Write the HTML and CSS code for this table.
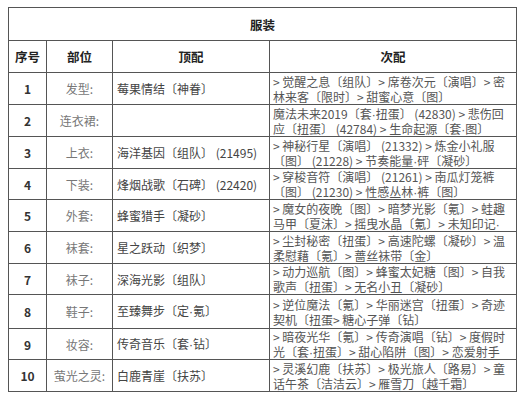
FILE: index.html
```html
<!DOCTYPE html>
<html lang="zh">
<head>
<meta charset="utf-8">
<link rel="stylesheet" href="styles.css">
</head>
<body>
<table class="tbl">
  <colgroup>
    <col class="c-no"><col class="c-part"><col class="c-top"><col class="c-sub">
  </colgroup>
  <tr class="r-title"><th colspan="4">服装</th></tr>
  <tr class="r-head"><th>序号</th><th>部位</th><th>顶配</th><th>次配</th></tr>
  <tr><td class="no">1</td><td class="part">发型:</td><td class="top">莓果情结〔神眷〕</td><td class="sub"><span class="ln">&gt; 觉醒之息〔组队〕&gt; 席卷次元〔演唱〕&gt; 密</span><span class="ln">林来客〔限时〕&gt; 甜蜜心意〔图〕</span></td></tr>
  <tr><td class="no">2</td><td class="part">连衣裙:</td><td class="top"></td><td class="sub"><span class="ln">魔法未来2019〔套<span class="dot">·</span>扭蛋〕 (42830) &gt; 悲伤回</span><span class="ln">应〔扭蛋〕 (42784) &gt; 生命起源〔套<span class="dot">·</span>图〕</span></td></tr>
  <tr><td class="no">3</td><td class="part">上衣:</td><td class="top">海洋基因〔组队〕 (21495)</td><td class="sub"><span class="ln">&gt; 神秘行星〔演唱〕 (21332) &gt; 炼金小礼服</span><span class="ln">〔图〕 (21228) &gt; 节奏能量<span class="dot">·</span>砰〔凝砂〕</span></td></tr>
  <tr class="short"><td class="no">4</td><td class="part">下装:</td><td class="top">烽烟战歌〔石碑〕 (22420)</td><td class="sub"><span class="ln">&gt; 穿梭音符〔演唱〕 (21261) &gt; 南瓜灯笼裤</span><span class="ln">〔图〕 (21230) &gt; 性感丛林<span class="dot">·</span>裤〔图〕</span></td></tr>
  <tr><td class="no">5</td><td class="part">外套:</td><td class="top">蜂蜜猎手〔凝砂〕</td><td class="sub"><span class="ln">&gt; 魔女的夜晚〔图〕&gt; 暗梦光影〔氪〕&gt; 蛙趣</span><span class="ln">马甲〔夏沫〕&gt; 摇曳水晶〔氪〕&gt; 未知印记<span class="dot">·</span></span></td></tr>
  <tr><td class="no">6</td><td class="part">袜套:</td><td class="top">星之跃动〔织梦〕</td><td class="sub"><span class="ln">&gt; 尘封秘密〔扭蛋〕&gt; 高速陀螺〔凝砂〕&gt; 温</span><span class="ln">柔慰藉〔氪〕&gt; 蔷丝袜带〔金〕</span></td></tr>
  <tr class="short"><td class="no">7</td><td class="part">袜子:</td><td class="top">深海光影〔组队〕</td><td class="sub"><span class="ln">&gt; 动力巡航〔图〕&gt; 蜂蜜太妃糖〔图〕&gt; 自我</span><span class="ln">歌声〔扭蛋〕&gt; 无名小丑〔凝砂〕</span></td></tr>
  <tr class="tall"><td class="no">8</td><td class="part">鞋子:</td><td class="top">至臻舞步〔定<span class="dot">·</span>氪〕</td><td class="sub"><span class="ln">&gt; 逆位魔法〔氪〕&gt; 华丽迷宫〔扭蛋〕&gt; 奇迹</span><span class="ln">契机〔扭蛋&gt; 糖心子弹〔钻〕</span></td></tr>
  <tr class="short"><td class="no">9</td><td class="part">妆容:</td><td class="top">传奇音乐〔套<span class="dot">·</span>钻〕</td><td class="sub"><span class="ln">&gt; 暗夜光华〔氪〕&gt; 传奇演唱〔钻〕&gt; 度假时</span><span class="ln">光〔套<span class="dot">·</span>扭蛋〕&gt; 甜心陷阱〔图〕&gt; 恋爱射手</span></td></tr>
  <tr><td class="no">10</td><td class="part">萤光之灵:</td><td class="top">白鹿青崖〔扶苏〕</td><td class="sub"><span class="ln">&gt; 灵溪幻鹿〔扶苏〕&gt; 极光旅人〔路易〕&gt; 童</span><span class="ln">话午茶〔洁洁云〕&gt; 雁雪刀〔越千霜〕</span></td></tr>
</table>
</body>
</html>
```

FILE: styles.css
```css
html, body {
  margin: 0;
  padding: 0;
  background: #ffffff;
}
body {
  padding: 7px 8px;
  font-family: "Noto Sans CJK SC", "Noto Sans", sans-serif;
  font-size: 12px;
  line-height: 15px;
  color: #444;
}
.tbl {
  width: 508px;
  border-collapse: collapse;
  table-layout: fixed;
  border: 1px solid #444;
}
.c-no { width: 38px; }
.c-part { width: 66px; }
.c-top { width: 157px; }
.c-sub { width: 247px; }
.tbl th, .tbl td {
  border: 1px solid #555;
  padding: 0;
  white-space: nowrap;
  overflow: hidden;
}
.tbl th {
  font-weight: bold;
  font-size: 12.5px;
  color: #222;
  text-align: center;
}
.tbl tr { height: 32px; }
.tbl tr.short { height: 31px; }
.tbl tr.tall { height: 34px; }
.tbl tr.r-title { height: 33px; }
.tbl tr.r-head { height: 32px; }
.no {
  text-align: center;
  font-weight: bold;
  color: #333;
}
.part {
  text-align: center;
  color: #777;
}
.tbl td.top {
  padding-left: 4px;
  color: #444;
}
.tbl td.sub {
  padding-left: 3px;
  color: #555;
  vertical-align: middle;
}
.ln {
  display: block;
  height: 15px;
  line-height: 15px;
}
.dot {
  font-family: "Liberation Sans", sans-serif;
}
```
